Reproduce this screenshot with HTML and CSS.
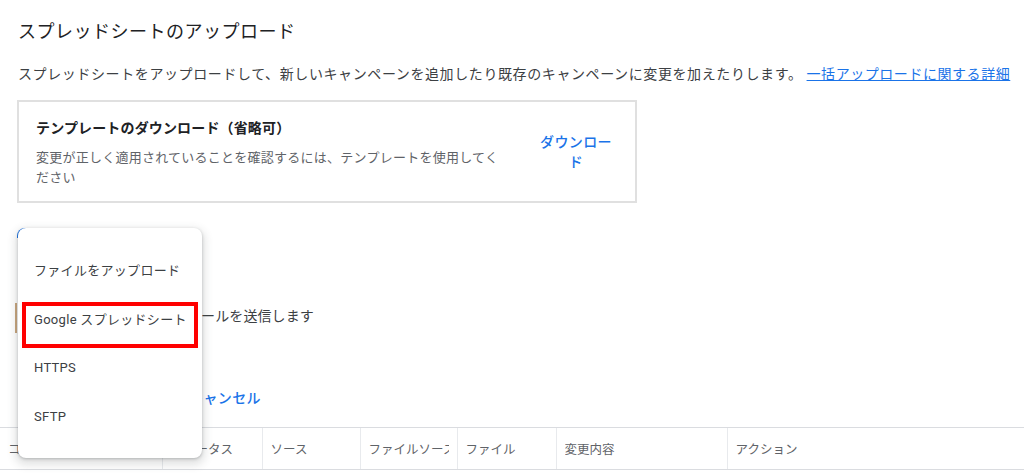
FILE: index.html
```html
<!DOCTYPE html>
<html lang="ja">
<head>
<meta charset="utf-8">
<title>スプレッドシートのアップロード</title>
<link rel="stylesheet" href="styles.css">
</head>
<body>
<div class="page">
  <h1 class="title">スプレッドシートのアップロード</h1>
  <p class="desc">スプレッドシートをアップロードして、新しいキャンペーンを追加したり既存のキャンペーンに変更を加えたりします。 <a class="link" href="#">一括アップロードに関する詳細</a></p>
  <div class="card">
    <div class="card-text">
      <div class="card-title">テンプレートのダウンロード（省略可）</div>
      <div class="card-body">変更が正しく適用されていることを確認するには、テンプレートを使用してください</div>
    </div>
    <a class="card-action" href="#">ダウンロード</a>
  </div>
  <div class="upload-row"><span class="upload-btn"></span></div>
  <label class="check"><span class="box"></span><span class="check-label">アップロード完了時にメールを送信します</span></label>
  <div class="actions">
    <button class="btn btn-primary">プレビュー</button>
    <button class="btn btn-text">適用</button>
    <button class="btn btn-cancel">キャンセル</button>
  </div>
</div>
<table class="history">
  <thead>
    <tr>
      <th class="c1"><span>コメント</span></th>
      <th class="c2"><span>ステータス</span></th>
      <th class="c3"><span>ソース</span></th>
      <th class="c4"><span>ファイルソース</span></th>
      <th class="c5"><span>ファイル</span></th>
      <th class="c6"><span>変更内容</span></th>
      <th class="c7"><span>アクション</span></th>
    </tr>
  </thead>
</table>
<div class="menu">
  <div class="menu-item">ファイルをアップロード</div>
  <div class="menu-item marked">Google スプレッドシート</div>
  <div class="menu-item">HTTPS</div>
  <div class="menu-item">SFTP</div>
</div>
</body>
</html>
```
FILE: styles.css
```css
* { box-sizing: border-box; }
html, body { margin: 0; padding: 0; background: #fff; }
body {
  font-family: Roboto, "Noto Sans CJK JP", sans-serif;
  color: #3c4043;
  position: relative;
  width: 1024px;
  height: 473px;
  overflow: hidden;
}
.page { padding: 20px 17px 0; }
.title {
  margin: 0 0 0 1px;
  font-size: 18px;
  font-weight: 400;
  line-height: 24px;
  letter-spacing: 0.5px;
  color: #202124;
}
.desc {
  margin: 20px 0 0 1px;
  font-size: 14px;
  line-height: 20px;
  letter-spacing: 0.6px;
  color: #3c4043;
  white-space: nowrap;
}
.link { color: #1a73e8; text-decoration: underline; letter-spacing: 0.55px; }
.card {
  margin-top: 16px;
  width: 620px;
  height: 103px;
  border: 2px solid #e0e0e0;
  display: flex;
  align-items: center;
  padding: 0 19px 0 17px;
  gap: 26px;
}
.card-text { flex: 1; align-self: flex-start; padding-top: 16px; }
.card-title {
  font-size: 14px;
  font-weight: 700;
  line-height: 20px;
  letter-spacing: 0.15px;
  color: #202124;
}
.card-body {
  margin-top: 10px;
  font-size: 13px;
  line-height: 19.5px;
  letter-spacing: 0.25px;
  color: #5f6368;
}
.card-action {
  width: 80px;
  text-align: center;
  font-size: 14px;
  font-weight: 500;
  line-height: 20px;
  letter-spacing: 0.4px;
  color: #1a73e8;
  text-decoration: none;
}
.upload-row { margin-top: 25px; height: 36px; display: flex; }
.upload-btn {
  width: 40px;
  height: 10px;
  border-top: 2px solid #1a73e8;
  border-left: 2px solid #1a73e8;
  border-top-left-radius: 8px;
}
.check {
  margin-top: 39px;
  height: 30px;
  display: flex;
  align-items: center;
  gap: 10px;
  margin-left: -2px;
}
.box {
  width: 24px;
  height: 30px;
  border-left: 2px solid #c9a57d;
}
.check-label {
  font-size: 14px;
  line-height: 20px;
  letter-spacing: 0.1px;
  color: #3c4043;
  margin-top: -5px;
  margin-left: -3px;
}
.actions {
  margin-top: 46px;
  margin-left: 6px;
  height: 36px;
  display: flex;
  align-items: center;
  gap: 8px;
}
.btn {
  height: 36px;
  border: none;
  background: none;
  font: inherit;
  font-size: 14px;
  font-weight: 500;
  letter-spacing: 0.4px;
  padding: 0;
}
.btn-primary { width: 86px; background: #1a73e8; color: #fff; border-radius: 4px; }
.btn-text { width: 64px; color: #1a73e8; }
.btn-cancel { color: #1a73e8; }
.history {
  margin-top: 12px;
  width: 1024px;
  border-collapse: collapse;
  table-layout: fixed;
}
.history th {
  height: 42px;
  padding: 0 8px;
  text-align: left;
  font-size: 12.5px;
  font-weight: 400;
  color: #5f6368;
  border-top: 1px solid #dadce0;
  border-bottom: 1px solid #dadce0;
  border-left: 1px solid #e8eaed;
}
.history th:first-child { border-left: none; }
.history th span { display: block; overflow: hidden; white-space: nowrap; }
.c1 { width: 162px; }
.c2 { width: 100px; }
.c3 { width: 98px; }
.c4 { width: 97px; }
.c5 { width: 99px; }
.c6 { width: 171px; }
.c7 { width: auto; }
.menu {
  position: absolute;
  left: 18px;
  top: 228px;
  width: 184px;
  height: 230px;
  padding: 17px 0;
  background: #fff;
  border-radius: 8px;
  box-shadow: 0 1px 3px rgba(60,64,67,0.3), 0 4px 8px 3px rgba(60,64,67,0.15);
}
.menu-item {
  height: 49px;
  padding-left: 16px;
  display: flex;
  align-items: center;
  font-size: 13px;
  letter-spacing: 0.3px;
  color: #3c4043;
  position: relative;
}
.menu-item.marked::after {
  content: "";
  position: absolute;
  left: 4px;
  right: 4px;
  top: 8px;
  height: 38px;
  border: 4px solid #ff0000;
}
```
